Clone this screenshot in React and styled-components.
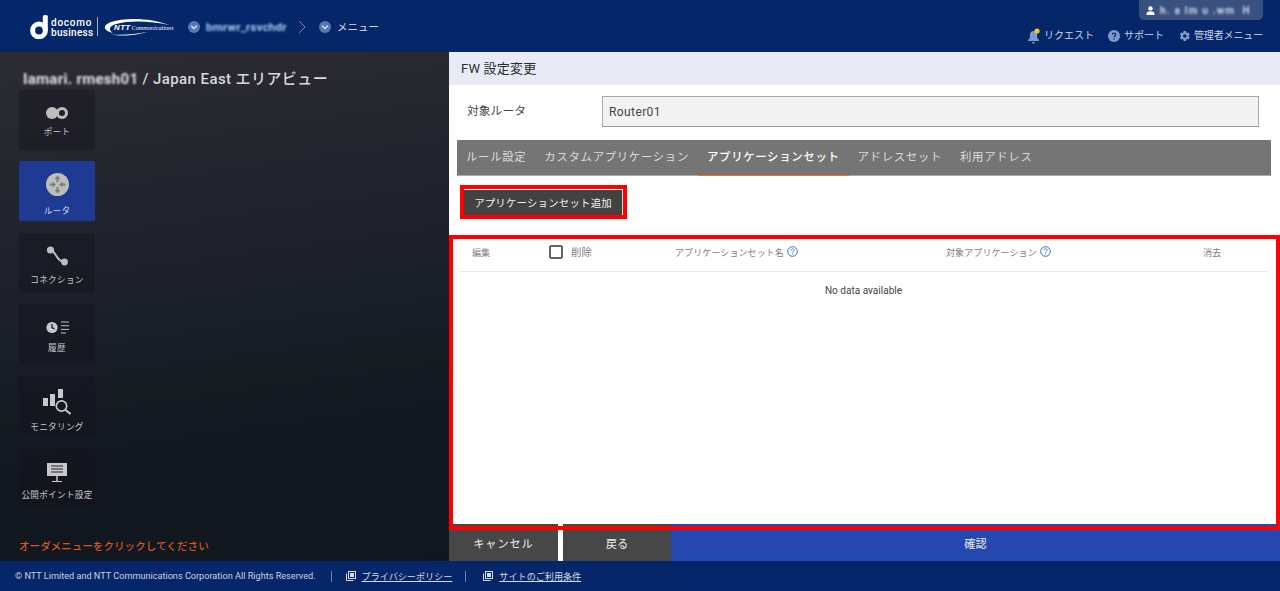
import React from "react";
import styled, { createGlobalStyle } from "styled-components";

const Global = createGlobalStyle`
  html, body { margin: 0; padding: 0; height: 100%; overflow: hidden; }
  body { font-family: Roboto, "Noto Sans CJK JP", sans-serif; }
  #root { height: 100%; }
`;

const Page = styled.div`
  height: 591px; width: 1280px; display: flex; flex-direction: column; background: #fff;
`;

/* header */
const Header = styled.header`
  height: 52px; flex: none; background: #05276a; display: flex; justify-content: space-between; padding-left: 30px; box-sizing: border-box; color: #dfe5f0;
`;
const BrandRow = styled.div`
  display: flex; align-items: center;
`;
const Docomo = styled.div`
  width: 42px; margin-left: 3px; display: flex; flex-direction: column; color: #fff; font-size: 10px; line-height: 10px; font-weight: 500; padding-top: 3px;
`;
const DocomoLine = styled.span`
  letter-spacing: ${p => p.$ls}px;
`;
const Divider = styled.div`
  width: 1px; height: 19px; background: #9fb0cc; margin: 1px 5px 0 4px;
`;
const NttLogo = styled.div`
  position: relative; width: 71px; height: 18px; margin-top: 1px;
`;
const NttText = styled.div`
  position: absolute; left: 11px; top: 5px; display: flex; align-items: baseline; gap: 1px; white-space: nowrap; color: #fff;
  b { font: italic 700 8px/9px "Liberation Sans", sans-serif; letter-spacing: .35px; }
  span { font: italic 400 6.2px/9px "Liberation Serif", serif; }
`;
const Crumb = styled.div`
  display: flex; align-items: center; margin-left: ${p => p.$ml}px; gap: 6px; font-size: 10.5px; color: #d5dbe8; padding-top: 1px;
`;
const Blur = styled.span`
  filter: blur(${p => p.$r || 1}px); color: ${p => p.$c || "inherit"}; white-space: pre; font-weight: ${p => p.$w || 400};
`;
const CrumbName = styled(Blur)`
  font-size: 11.5px; letter-spacing: .25px; width: 82px; overflow: hidden;
`;
const UserName = styled(Blur)`
  font-size: 10px; letter-spacing: 1.2px;
`;
const AreaName = styled(Blur)`
  letter-spacing: .3px;
`;
const HeaderRight = styled.div`
  display: flex; flex-direction: column; align-items: flex-end; padding-right: 17px;
`;
const UserPill = styled.div`
  width: 124px; height: 20px; box-sizing: border-box; background: #38517f; border-radius: 0 0 5px 5px; display: flex; align-items: center; padding-left: 7px; gap: 5px; color: #c4c8e0;
`;
const HeaderNav = styled.nav`
  display: flex; gap: 14px; margin-top: 8px;
`;
const HeaderLink = styled.div`
  display: flex; align-items: center; gap: ${p => p.$gap || 4}px; margin-left: ${p => p.$ml || 0}px; letter-spacing: ${p => p.$ls || 0}px; font-size: 10px; line-height: 14px; color: #cdd6e6; white-space: nowrap;
`;

/* main */
const Main = styled.div`
  flex: 1; display: flex; min-height: 0;
`;
const Sidebar = styled.aside`
  width: 449px; flex: none; box-sizing: border-box; padding: 18px 0 7px 19px; display: flex; flex-direction: column;
  background: linear-gradient(172deg, #2b2b33 0%, #20232c 35%, #12181f 75%, #10171e 100%);
`;
const AreaTitle = styled.div`
  height: 20px; margin-left: 4px; font-size: 15px; line-height: 18px; font-weight: 500; letter-spacing: .42px; color: #d8d8dc; white-space: pre;
`;
const NavList = styled.div`
  display: flex; flex-direction: column; gap: 11.4px;
`;
const NavItem = styled.div`
  width: 76px; height: 60px; box-sizing: border-box; padding-top: ${p => p.$top}px; border-radius: 2px;
  display: flex; flex-direction: column; align-items: center;
  background: ${p => (p.$active ? "#1e3a92" : "rgba(20,20,28,.42)")};
  color: ${p => (p.$active ? "#d4d9ec" : "#c8c8c8")};
  svg { display: block; flex: none; }
`;
const NavLabel = styled.div`
  margin-top: ${p => p.$mt}px; font-size: 8.6px; line-height: 12px; letter-spacing: .3px; white-space: nowrap;
`;
const Hint = styled.div`
  margin-top: auto; font-size: 10.6px; line-height: 14px; color: #d9561e; font-weight: 500;
`;

/* content */
const Content = styled.section`
  flex: 1; position: relative; display: flex; flex-direction: column; background: #fff;
`;
const TitleBar = styled.div`
  height: 33px; flex: none; background: #e8ebf4; display: flex; align-items: center; padding-left: 12px; font-size: 13px; letter-spacing: .2px; color: #2b2b2b; padding-bottom: 3px; box-sizing: border-box;
`;
const TargetRow = styled.div`
  height: 55px; flex: none; display: flex; align-items: flex-start; padding: 11px 21px 0 18px; box-sizing: border-box;
`;
const TargetLabel = styled.div`
  width: 135px; flex: none; font-size: 11.8px; line-height: 31px; color: #444;
`;
const TargetInput = styled.div`
  flex: 1; height: 31px; box-sizing: border-box; background: #f2f2f2; border: 1px solid #aaa; border-bottom-color: #999; padding-left: 6px; font-size: 12px; line-height: 30px; letter-spacing: .4px; color: #444;
`;
const Tabs = styled.div`
  height: 36px; flex: none; margin: 0 9px 0 8px; background: #757575; display: flex; box-sizing: border-box; border-bottom: 1px solid #aaa;
`;
const Tab = styled.div`
  padding: 0 9px; font-size: 11.4px; letter-spacing: .68px; line-height: 34px; white-space: nowrap; box-sizing: border-box; height: 36px;
  font-weight: ${p => (p.$active ? 500 : 400)};
  color: ${p => (p.$active ? "#fff" : "#dcdcdc")};
  border-bottom: 1px solid ${p => (p.$active ? "#f0692c" : "transparent")};
`;
const ButtonArea = styled.div`
  height: 60px; flex: none; padding: 14px 0 0 15px; box-sizing: border-box;
`;
const AddButton = styled.button`
  display: block; width: 158px; height: 25px; border: 0; padding: 0; background: #424242; color: #f2f2f2; font-family: inherit; font-size: 10.4px; letter-spacing: .22px; box-shadow: 0 2px 3px rgba(0,0,0,.3);
`;
const Table = styled.div`
  flex: 1; margin: 0 12px 0 10px; min-height: 0;
`;
const TableHead = styled.div`
  height: 36px; box-sizing: border-box; display: grid; grid-template-columns: 90px 126px 271px 257px 1fr; padding: 0 0 4px 13px; align-items: center; border-bottom: 1px solid #e8e8e8; font-size: 9.1px; color: #808080;
`;
const HeadCell = styled.div`
  display: flex; align-items: center; gap: ${p => p.$gap || 3}px; white-space: nowrap;
  &:nth-child(2) { margin-left: -13px; font-size: 10.4px; }
  &:nth-child(3) { margin-left: -13px; }
  &:nth-child(4) { margin-left: -13px; }
  &:nth-child(5) { margin-left: -13px; }
`;
const Check = styled.span`
  width: 14px; height: 14px; box-sizing: border-box; border: 2px solid #666; border-radius: 2px; flex: none; margin-left: 0;
`;
const Empty = styled.div`
  text-align: center; font-size: 10.05px; line-height: 14px; color: #444; padding-top: 12px;
`;
const Actions = styled.div`
  height: 37px; flex: none; display: flex; background: #fff;
`;
const Action = styled.button`
  border: 0; padding: 0; margin: 0; height: 37px; width: ${p => p.$w ? `${p.$w}px` : "auto"}; flex: ${p => p.$w ? "none" : "1"}; margin-right: ${p => p.$mr || 0}px;
  background: ${p => p.$bg}; color: #eee; font-family: inherit; font-size: 11.2px; letter-spacing: ${p => p.$ls || 0}px;
`;
const Highlight = styled.div`
  position: absolute; box-sizing: border-box; border: 4px solid #ff0000; pointer-events: none;
  top: ${p => p.$top}px; left: ${p => p.$left}px; width: ${p => p.$w}px; height: ${p => p.$h}px;
`;

/* footer */
const Footer = styled.footer`
  height: 30px; flex: none; background: #05276a; display: flex; align-items: center; padding-left: 15px; color: #c9d2e2; font-size: 9.15px; box-sizing: border-box;
`;
const Sep = styled.span`
  width: 1px; height: 11px; background: #6a7fa6; margin: 0 ${p => p.$mr}px 0 ${p => p.$ml}px;
`;
const FootLink = styled.a`
  display: flex; align-items: center; gap: 6px; color: #d4dbe8; font-size: 9.1px; span { text-decoration: underline; }
`;

const Chevron = () => (
  <svg width="12" height="12" viewBox="0 0 12 12"><circle cx="6" cy="6" r="6" fill="#5877b3"/><path d="M3.2 4.8 6 7.6l2.8-2.8" fill="none" stroke="#dfe6f4" strokeWidth="1.3"/></svg>
);
const Help = () => (
  <svg width="11" height="11" viewBox="0 0 11 11"><circle cx="5.5" cy="5.5" r="4.8" fill="none" stroke="#3f6cc4" strokeWidth="1"/><path d="M3.9 4.3c.1-1 .8-1.4 1.6-1.4.9 0 1.6.5 1.6 1.3 0 1.2-1.6 1.2-1.6 2.4" fill="none" stroke="#3f6cc4" strokeWidth=".9"/><circle cx="5.5" cy="8" r=".6" fill="#3f6cc4"/></svg>
);
const ExtIcon = () => (
  <svg width="10" height="10" viewBox="0 0 10 10"><rect x="2.5" y=".5" width="7" height="7" fill="none" stroke="#d4dbe8"/><path d="M.5 2.5v7h7" fill="none" stroke="#d4dbe8"/><rect x="4" y="2" width="4" height="4" fill="#d4dbe8"/></svg>
);

export default function App() {
  return (
    <Page>
      <Global />
      <Header>
        <BrandRow>
          <svg width="18" height="24" viewBox="0 0 18 24" style={{ marginTop: 1 }}><circle cx="9" cy="15.5" r="6.4" fill="none" stroke="#fff" strokeWidth="5"/><rect x="12.8" y="0" width="5" height="16" rx="1.5" fill="#fff"/></svg>
          <Docomo><DocomoLine $ls={.75}>docomo</DocomoLine><DocomoLine $ls={.3}>business</DocomoLine></Docomo>
          <Divider />
          <NttLogo>
            <svg width="71" height="18" viewBox="0 0 71 18"><path d="M10 15C0 13 -1 7 8 4 C22 -1 50 0 66 7 C50 3 26 2 13 6 C6 8 5 12 10 15Z" fill="#fff"/><path d="M8 16c10 3 26 1 36-2-12 2-26 4-36 2Z" fill="#fff"/></svg>
            <NttText><b>NTT</b><span>Communications</span></NttText>
          </NttLogo>
          <Crumb $ml={14}><Chevron /><CrumbName $r={.8} $c="#a6cff6" $w={700}>bmrwr_rsvchdr</CrumbName></Crumb>
          <svg width="8" height="14" viewBox="0 0 8 14" style={{ margin: "1px 13px 0 10px" }}><path d="M1 1l6 6-6 6" fill="none" stroke="#6f86b4" strokeWidth="1"/></svg>
          <Crumb $ml={0}><Chevron />メニュー</Crumb>
        </BrandRow>
        <HeaderRight>
          <UserPill>
            <svg width="9" height="9" viewBox="0 0 9 9" fill="#fff"><circle cx="4.5" cy="2.4" r="2.2"/><path d="M.6 9V7.4C.6 6 2.4 5.3 4.5 5.3S8.400 6 8.400 7.400V9Z"/></svg>
            <UserName $r={.9} $c="#d8d4ee" $w={700}>h. a lm u .wm  H</UserName>
          </UserPill>
          <HeaderNav>
            <HeaderLink>
              <svg width="14" height="16" viewBox="-1 0 14 16"><path d="M6.500 3c-2.400 0-3.600 1.800-3.600 4v3L1 12v1h11v-1l-1.800-2V7c0-2.200-1.300-4-3.700-4Z" fill="#7f9ac8"/><path d="M5 14h3a1.500 1.500 0 0 1-3 0Z" fill="#7f9ac8"/><circle cx="10" cy="3" r="2.600" fill="#f5c518"/></svg>
              リクエスト
            </HeaderLink>
            <HeaderLink>
              <svg width="12" height="12" viewBox="0 0 12 12"><circle cx="6" cy="6" r="6" fill="#7f9ac8"/><path d="M4.200 4.700c.1-1.100.9-1.600 1.800-1.600 1 0 1.800.6 1.800 1.500 0 1.300-1.800 1.300-1.800 2.600" fill="none" stroke="#05276a" strokeWidth="1.200"/><circle cx="6" cy="9" r=".8" fill="#05276a"/></svg>
              サポート
            </HeaderLink>
            <HeaderLink $gap={3} $ml={1} $ls={-.14}>
              <svg width="12" height="12" viewBox="0 0 24 24" fill="#7f9ac8"><path d="M19.400 13c.04-.3.1-.7.1-1s-.06-.7-.1-1l2.100-1.600c.2-.2.250-.4.100-.6l-2-3.500c-.1-.2-.4-.3-.6-.2l-2.500 1c-.5-.4-1.100-.7-1.700-1L14 2.400c0-.2-.200-.4-.5-.4h-4c-.3 0-.5.200-.5.400l-.4 2.700c-.6.300-1.200.6-1.700 1l-2.500-1c-.2-.1-.5 0-.6.200l-2 3.500c-.1.200-.1.400.1.600L4 11c0 .3-.1.700-.1 1s.06.700.1 1l-2.100 1.600c-.2.200-.250.400-.1.600l2 3.500c.1.200.4.300.6.200l2.500-1c.5.400 1.100.7 1.700 1l.4 2.700c0 .2.200.4.500.4h4c.3 0 .5-.200.5-.4l.4-2.700c.6-.3 1.200-.6 1.700-1l2.500 1c.2.100.5 0 .6-.2l2-3.500c.1-.2.100-.4-.1-.6ZM11.500 15.500a3.500 3.500 0 1 1 0-7 3.500 3.500 0 0 1 0 7Z"/></svg>
              管理者メニュー
            </HeaderLink>
          </HeaderNav>
        </HeaderRight>
      </Header>

      <Main>
        <Sidebar>
          <AreaTitle><AreaName $r={1.1} $c="#e4e4e8" $w={700}>Iamari. rmesh01</AreaName> / Japan East エリアビュー</AreaTitle>
          <NavList>
            <NavItem $top={17}>
              <svg width="22" height="12" viewBox="0 0 22 12"><circle cx="6" cy="6" r="6" fill="#bdbdbd"/><circle cx="16" cy="6" r="6" fill="#bdbdbd"/><circle cx="16" cy="6" r="3" fill="#20212b"/></svg>
              <NavLabel $mt={7}>ポート</NavLabel>
            </NavItem>
            <NavItem $active $top={12}>
              <svg width="23" height="23" viewBox="0 0 23 23"><circle cx="11.500" cy="11.500" r="11.500" fill="#bdbdbd"/><g fill="#7c7c7c"><path d="M11.500 2.500l3 3.500h-2v3h-2V6h-2Z"/><path d="M11.500 20.500l3-3.500h-2v-3h-2v3h-2Z"/><path d="M10 11.500L6.500 8.500v2h-3v2h3v2Z"/><path d="M13 11.500l3.500-3v2h3v2h-3v2Z"/></g></svg>
              <NavLabel $mt={9}>ルータ</NavLabel>
            </NavItem>
            <NavItem $top={11}>
              <svg width="24" height="24" viewBox="0 0 24 24"><path d="M5 6c6 0 6 12 14 12" fill="none" stroke="#bdbdbd" strokeWidth="2"/><circle cx="5.500" cy="6" r="3.600" fill="#bdbdbd"/><circle cx="19.500" cy="18" r="3.400" fill="#bdbdbd"/></svg>
              <NavLabel $mt={6}>コネクション</NavLabel>
            </NavItem>
            <NavItem $top={17}>
              <svg width="23" height="13" viewBox="0 0 23 13"><circle cx="6" cy="6.500" r="5.600" fill="#c8c8c8"/><path d="M6 3v3.600l2.400 1.300" fill="none" stroke="#1c2028" strokeWidth="1.300"/><path d="M15 1h8M15 4.700h8M15 8.400h8M15 12h5" stroke="#bdbdbd" strokeWidth="1"/></svg>
              <NavLabel $mt={8}>履歴</NavLabel>
            </NavItem>
            <NavItem $top={13}>
              <svg width="28" height="26" viewBox="0 0 28 26"><g fill="#c8c8c8"><rect x="0" y="9" width="5" height="8"/><rect x="7" y="5" width="5" height="12"/><rect x="15" y="0" width="5" height="9"/></g><circle cx="18.500" cy="17" r="5.200" fill="none" stroke="#c8c8c8" strokeWidth="1.700"/><path d="M22.500 21l5 4" stroke="#c8c8c8" strokeWidth="2"/></svg>
              <NavLabel $mt={6}>モニタリング</NavLabel>
            </NavItem>
            <NavItem $top={15}>
              <svg width="22" height="20" viewBox="0 0 22 20"><rect x="1" y="1" width="20" height="13" fill="#c8c8c8"/><path d="M5 4h12M5 7h12M5 10h12" stroke="#20242c" strokeWidth="1"/><path d="M11 14v5" stroke="#c8c8c8" strokeWidth="1.500"/><path d="M6 19.500h10" stroke="#c8c8c8" strokeWidth="1"/></svg>
              <NavLabel $mt={7}>公開ポイント設定</NavLabel>
            </NavItem>
          </NavList>
          <Hint>オーダメニューをクリックしてください</Hint>
        </Sidebar>

        <Content>
          <TitleBar>FW 設定変更</TitleBar>
          <TargetRow>
            <TargetLabel>対象ルータ</TargetLabel>
            <TargetInput>Router01</TargetInput>
          </TargetRow>
          <Tabs>
            <Tab>ルール設定</Tab>
            <Tab>カスタムアプリケーション</Tab>
            <Tab $active>アプリケーションセット</Tab>
            <Tab>アドレスセット</Tab>
            <Tab>利用アドレス</Tab>
          </Tabs>
          <ButtonArea><AddButton>アプリケーションセット追加</AddButton></ButtonArea>
          <Table>
            <TableHead>
              <HeadCell>編集</HeadCell>
              <HeadCell $gap={8}><Check />削除</HeadCell>
              <HeadCell><span>アプリケーションセット名</span><Help /></HeadCell>
              <HeadCell><span>対象アプリケーション</span><Help /></HeadCell>
              <HeadCell>消去</HeadCell>
            </TableHead>
            <Empty>No data available</Empty>
          </Table>
          <Actions>
            <Action $w={109} $mr={5} $bg="#474747" $ls={.9}>キャンセル</Action>
            <Action $w={108} $bg="#474747">戻る</Action>
            <Action $bg="#2447b0">確認</Action>
          </Actions>
          <Highlight $top={133} $left={11} $w={167} $h={34} />
          <Highlight $top={183} $left={0} $w={831} $h={295} />
        </Content>
      </Main>

      <Footer>
        <span>© NTT Limited and NTT Communications Corporation All Rights Reserved.</span>
        <Sep $ml={15} $mr={14} />
        <FootLink><ExtIcon /><span>プライバシーポリシー</span></FootLink>
        <Sep $ml={13} $mr={17} />
        <FootLink><ExtIcon /><span>サイトのご利用条件</span></FootLink>
      </Footer>
    </Page>
  );
}
